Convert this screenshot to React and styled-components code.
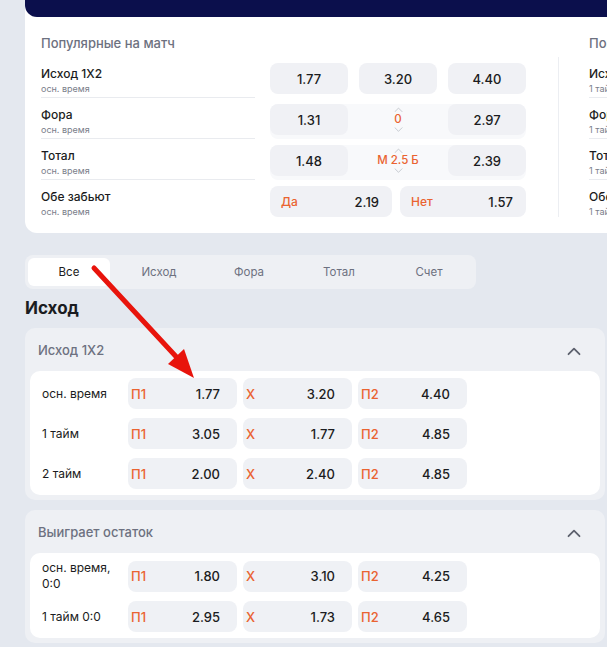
import styled, { createGlobalStyle } from "styled-components";

const GlobalStyle = createGlobalStyle`
  body {
    margin: 0;
    background: #e4e8ef;
    font-family: Inter, "Noto Sans", sans-serif;
    color: #1b1c21;
    overflow: hidden;
  }
`;

const Page = styled.div`
  position: relative;
  padding: 0 2px 0 25px;
  width: 580px;
`;

const Hero = styled.div`
  width: 1100px;
  background: #fff;
  border-radius: 0 0 12px 12px;
  overflow: hidden;
`;

const Banner = styled.div`
  height: 17px;
  background: #0b0f4c;
  border-radius: 0 0 12px 12px;
`;

const Panels = styled.div`
  display: flex;
  align-items: flex-start;
  padding: 18px 0 16px 16px;
`;

const Panel = styled.div`
  flex: none;
  width: 485px;
  padding-right: 32px;
  & + & {
    padding-left: 30px;
    border-left: 1px solid #eceef2;
    margin-top: 22px;
  }
`;

const PanelTitle = styled.div`
  font-size: 13px;
  font-weight: 500;
  color: #6d7180;
  line-height: 16px;
  margin-bottom: 12px;
  ${Panel} + ${Panel} & {
    margin-top: -22px;
  }
`;

const MarketRow = styled.div`
  display: grid;
  grid-template-columns: 214px 256px;
  column-gap: 15px;
  height: 31px;
  & + & {
    margin-top: 10px;
  }
`;

const MarketLabel = styled.div`
  height: 35px;
  box-sizing: border-box;
  padding-top: 4px;
  border-bottom: ${(p) => (p.last ? "none" : "1px solid #e9ebef")};
`;

const MarketName = styled.div`
  font-size: 12px;
  font-weight: 500;
  line-height: 14px;
`;

const MarketSub = styled.div`
  font-size: 9px;
  color: #7a7e8a;
  line-height: 14px;
  margin-top: 1px;
`;

const OddsLine = styled.div`
  display: grid;
  grid-template-columns: ${(p) => p.cols || "78px 78px 78px"};
  column-gap: ${(p) => p.gap || "11px"};
  background: ${(p) => (p.line ? "#f8f9fb" : "transparent")};
  border-radius: 8px;
`;

const Odd = styled.div`
  display: flex;
  align-items: center;
  justify-content: ${(p) => (p.split ? "space-between" : "center")};
  padding: ${(p) => (p.split ? "0 13px 0 11px" : "0")};
  height: 31px;
  background: #f0f1f5;
  border-radius: 8px;
  font-size: 13px;
  font-weight: 500;
`;

const Tag = styled.span`
  color: #ea6331;
  font-weight: 500;
  font-size: ${(p) => p.size || "12px"};
`;

const LineSpinner = styled.div`
  display: flex;
  flex-direction: column;
  align-items: center;
  justify-content: center;
  gap: 1px;
  height: 31px;
  color: #ea6331;
  font-size: 11.5px;
  font-weight: 500;
  line-height: 13px;
  svg {
    display: block;
  }
`;

const Tabs = styled.div`
  display: flex;
  gap: 8px;
  width: 451px;
  box-sizing: border-box;
  margin-top: 22px;
  padding: 3px;
  background: #eef0f4;
  border-radius: 8px;
`;

const Tab = styled.div`
  width: 82px;
  height: 28px;
  display: flex;
  align-items: center;
  justify-content: center;
  border-radius: 6px;
  font-size: 11.5px;
  background: ${(p) => (p.active ? "#fff" : "transparent")};
  color: ${(p) => (p.active ? "#1b1c21" : "#6d7180")};
`;

const Heading = styled.h2`
  margin: 9px 0 0;
  font-size: 17px;
  font-weight: 700;
  line-height: 20px;
`;

const Section = styled.div`
  margin-top: 10px;
  background: #eef0f4;
  border-radius: 10px;
  padding: 0 5px 5px;
`;

const SectionHead = styled.div`
  display: flex;
  align-items: center;
  justify-content: space-between;
  height: 43px;
  padding: 0 19px 0 8px;
  font-size: 13px;
  font-weight: 500;
  color: #6d7180;
  svg {
    margin-top: 4px;
  }
`;

const SectionBody = styled.div`
  background: #fff;
  border-radius: 10px;
  padding: 7px 12px 6px;
  display: flex;
  flex-direction: column;
  gap: 9px;
`;

const OutcomeRow = styled.div`
  display: grid;
  grid-template-columns: 80px 109px 109px 109px;
  column-gap: 6px;
  align-items: center;
`;

const OutcomeLabel = styled.div`
  font-size: 12px;
  line-height: 16px;
  white-space: pre-line;
`;

const OutcomeOdd = styled(Odd)`
  justify-content: space-between;
  padding: 0 17px 0 3px;
  background: #eff1f5;
`;

const Arrow = styled.svg`
  position: absolute;
  left: 0;
  top: 0;
  pointer-events: none;
`;

const Chevron = ({ dir = "up", size = 14, color = "#6d7180", stroke = 1.8 }) => (
  <svg width={size} height={size * 0.6} viewBox="0 0 14 8" fill="none">
    <path
      d={dir === "up" ? "M1.5 7L7 1.5L12.5 7" : "M1.5 1L7 6.5L12.5 1"}
      stroke={color}
      strokeWidth={stroke}
      strokeLinecap="round"
      strokeLinejoin="round"
    />
  </svg>
);

const popular = [
  {
    title: "Популярные на матч",
    sub: "осн. время",
    rows: [
      { name: "Исход 1X2", odds: ["1.77", "3.20", "4.40"] },
      { name: "Фора", odds: ["1.31", "2.97"], line: "0" },
      { name: "Тотал", odds: ["1.48", "2.39"], line: "М 2.5 Б" },
      { name: "Обе забьют", yesNo: ["2.19", "1.57"] },
    ],
  },
  {
    title: "Популярные на 1 тайм",
    sub: "1 тайм",
    rows: [
      { name: "Исход 1X2", odds: ["2.45", "2.10", "5.20"] },
      { name: "Фора", odds: ["1.62", "2.25"], line: "0" },
      { name: "Тотал", odds: ["1.70", "2.05"], line: "М 1 Б" },
      { name: "Обе забьют", yesNo: ["4.60", "1.18"] },
    ],
  },
];

const sections = [
  {
    title: "Исход 1X2",
    rows: [
      { label: "осн. время", odds: ["1.77", "3.20", "4.40"] },
      { label: "1 тайм", odds: ["3.05", "1.77", "4.85"] },
      { label: "2 тайм", odds: ["2.00", "2.40", "4.85"] },
    ],
  },
  {
    title: "Выиграет остаток",
    rows: [
      { label: "осн. время,\n0:0", odds: ["1.80", "3.10", "4.25"] },
      { label: "1 тайм 0:0", odds: ["2.95", "1.73", "4.65"] },
    ],
  },
];

const tabs = ["Все", "Исход", "Фора", "Тотал", "Счет"];
const outcomeTags = ["П1", "X", "П2"];

const MarketOdds = ({ row }) => {
  if (row.yesNo)
    return (
      <OddsLine cols="122px 126px" gap="8px">
        <Odd split>
          <Tag>Да</Tag>
          {row.yesNo[0]}
        </Odd>
        <Odd split>
          <Tag>Нет</Tag>
          {row.yesNo[1]}
        </Odd>
      </OddsLine>
    );
  if (row.line)
    return (
      <OddsLine line>
        <Odd>{row.odds[0]}</Odd>
        <LineSpinner>
          <Chevron dir="up" size={9} color="#b9bcc5" stroke={1.2} />
          {row.line}
          <Chevron dir="down" size={9} color="#b9bcc5" stroke={1.2} />
        </LineSpinner>
        <Odd>{row.odds[1]}</Odd>
      </OddsLine>
    );
  return (
    <OddsLine>
      {row.odds.map((o, i) => (
        <Odd key={i}>{o}</Odd>
      ))}
    </OddsLine>
  );
};

export default function App() {
  return (
    <>
      <GlobalStyle />
      <Page>
        <Hero>
          <Banner />
          <Panels>
            {popular.map((panel) => (
              <Panel key={panel.title}>
                <PanelTitle>{panel.title}</PanelTitle>
                {panel.rows.map((row, i) => (
                  <MarketRow key={row.name}>
                    <MarketLabel last={i === panel.rows.length - 1}>
                      <MarketName>{row.name}</MarketName>
                      <MarketSub>{panel.sub}</MarketSub>
                    </MarketLabel>
                    <MarketOdds row={row} />
                  </MarketRow>
                ))}
              </Panel>
            ))}
          </Panels>
        </Hero>

        <Tabs>
          {tabs.map((t, i) => (
            <Tab key={t} active={i === 0}>
              {t}
            </Tab>
          ))}
        </Tabs>

        <Heading>Исход</Heading>

        {sections.map((s) => (
          <Section key={s.title}>
            <SectionHead>
              {s.title}
              <Chevron dir="up" size={14} color="#5d616d" stroke={1.8} />
            </SectionHead>
            <SectionBody>
              {s.rows.map((r) => (
                <OutcomeRow key={r.label}>
                  <OutcomeLabel>{r.label}</OutcomeLabel>
                  {r.odds.map((o, i) => (
                    <OutcomeOdd key={i}>
                      <Tag size="13px">{outcomeTags[i]}</Tag>
                      {o}
                    </OutcomeOdd>
                  ))}
                </OutcomeRow>
              ))}
            </SectionBody>
          </Section>
        ))}

        <Arrow width="607" height="647" viewBox="0 0 607 647">
          <line x1="94" y1="268" x2="182" y2="363" stroke="#e8140c" strokeWidth="5" strokeLinecap="round" />
          <polygon points="194,378 168,364 184,349" fill="#e8140c" />
        </Arrow>
      </Page>
    </>
  );
}
